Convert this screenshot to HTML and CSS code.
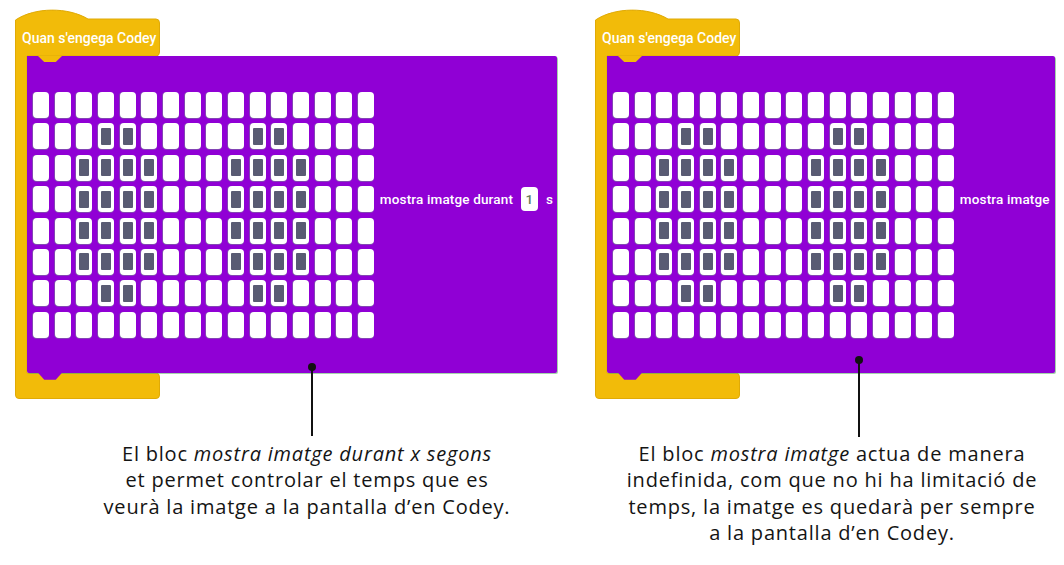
FILE: index.html
```html
<!DOCTYPE html>
<html lang="ca">
<head>
<meta charset="utf-8">
<title>Codey - mostra imatge</title>
<link rel="stylesheet" href="styles.css">
</head>
<body>
<div class="page">
  <section class="panel panel-left">
    <div class="block">
      <svg class="block-bg" viewBox="0 0 145 389" width="145" height="389" aria-hidden="true">
        <path d="M0.5,10 C20,-3 53,-3 73,9 L141,9 Q144.5,9 144.5,13 L144.5,42 Q144.5,46 141,46 L12,46 L12,363 L141,363 Q144.5,363 144.5,367 L144.5,385 Q144.5,388.5 141,388.5 L4,388.5 Q0.5,388.5 0.5,385 Z" fill="#f2bb09" stroke="#e0aa06" stroke-width="1"/>
      </svg>
      <div class="hat-label">Quan s'engega Codey</div>
      <div class="stack stack-left">
        <div class="grid">
          <i></i><i></i><i></i><i></i><i></i><i></i><i></i><i></i><i></i><i></i><i></i><i></i><i></i><i></i><i></i><i></i>
          <i></i><i></i><i></i><i class="on"></i><i class="on"></i><i></i><i></i><i></i><i></i><i></i><i class="on"></i><i class="on"></i><i></i><i></i><i></i><i></i>
          <i></i><i></i><i class="on"></i><i class="on"></i><i class="on"></i><i class="on"></i><i></i><i></i><i></i><i class="on"></i><i class="on"></i><i class="on"></i><i class="on"></i><i></i><i></i><i></i>
          <i></i><i></i><i class="on"></i><i class="on"></i><i class="on"></i><i class="on"></i><i></i><i></i><i></i><i class="on"></i><i class="on"></i><i class="on"></i><i class="on"></i><i></i><i></i><i></i>
          <i></i><i></i><i class="on"></i><i class="on"></i><i class="on"></i><i class="on"></i><i></i><i></i><i></i><i class="on"></i><i class="on"></i><i class="on"></i><i class="on"></i><i></i><i></i><i></i>
          <i></i><i></i><i class="on"></i><i class="on"></i><i class="on"></i><i class="on"></i><i></i><i></i><i></i><i class="on"></i><i class="on"></i><i class="on"></i><i class="on"></i><i></i><i></i><i></i>
          <i></i><i></i><i></i><i class="on"></i><i class="on"></i><i></i><i></i><i></i><i></i><i></i><i class="on"></i><i class="on"></i><i></i><i></i><i></i><i></i>
          <i></i><i></i><i></i><i></i><i></i><i></i><i></i><i></i><i></i><i></i><i></i><i></i><i></i><i></i><i></i><i></i>
        </div>
        <div class="label">
          <span>mostra imatge durant</span>
          <span class="input">1</span>
          <span>s</span>
        </div>
      </div>
    </div>
    <div class="pointer pointer-left"></div>
    <p class="caption caption-left">El bloc <em>mostra imatge durant x segons</em><br>et permet controlar el temps que es<br>veurà la imatge a la pantalla d’en Codey.</p>
  </section>

  <section class="panel panel-right">
    <div class="block">
      <svg class="block-bg" viewBox="0 0 145 389" width="145" height="389" aria-hidden="true">
        <path d="M0.5,10 C20,-3 53,-3 73,9 L141,9 Q144.5,9 144.5,13 L144.5,42 Q144.5,46 141,46 L12,46 L12,363 L141,363 Q144.5,363 144.5,367 L144.5,385 Q144.5,388.5 141,388.5 L4,388.5 Q0.5,388.5 0.5,385 Z" fill="#f2bb09" stroke="#e0aa06" stroke-width="1"/>
      </svg>
      <div class="hat-label">Quan s'engega Codey</div>
      <div class="stack stack-right">
        <div class="grid">
          <i></i><i></i><i></i><i></i><i></i><i></i><i></i><i></i><i></i><i></i><i></i><i></i><i></i><i></i><i></i><i></i>
          <i></i><i></i><i></i><i class="on"></i><i class="on"></i><i></i><i></i><i></i><i></i><i></i><i class="on"></i><i class="on"></i><i></i><i></i><i></i><i></i>
          <i></i><i></i><i class="on"></i><i class="on"></i><i class="on"></i><i class="on"></i><i></i><i></i><i></i><i class="on"></i><i class="on"></i><i class="on"></i><i class="on"></i><i></i><i></i><i></i>
          <i></i><i></i><i class="on"></i><i class="on"></i><i class="on"></i><i class="on"></i><i></i><i></i><i></i><i class="on"></i><i class="on"></i><i class="on"></i><i class="on"></i><i></i><i></i><i></i>
          <i></i><i></i><i class="on"></i><i class="on"></i><i class="on"></i><i class="on"></i><i></i><i></i><i></i><i class="on"></i><i class="on"></i><i class="on"></i><i class="on"></i><i></i><i></i><i></i>
          <i></i><i></i><i class="on"></i><i class="on"></i><i class="on"></i><i class="on"></i><i></i><i></i><i></i><i class="on"></i><i class="on"></i><i class="on"></i><i class="on"></i><i></i><i></i><i></i>
          <i></i><i></i><i></i><i class="on"></i><i class="on"></i><i></i><i></i><i></i><i></i><i></i><i class="on"></i><i class="on"></i><i></i><i></i><i></i><i></i>
          <i></i><i></i><i></i><i></i><i></i><i></i><i></i><i></i><i></i><i></i><i></i><i></i><i></i><i></i><i></i><i></i>
        </div>
        <div class="label">
          <span>mostra imatge</span>
        </div>
      </div>
    </div>
    <div class="pointer pointer-right"></div>
    <p class="caption caption-right">El bloc <em>mostra imatge</em> actua de manera<br>indefinida, com que no hi ha limitació de<br>temps, la imatge es quedarà per sempre<br>a la pantalla d’en Codey.</p>
  </section>
</div>
</body>
</html>
```

FILE: styles.css
```css
* { box-sizing: border-box; }

body {
  margin: 0;
  background: #ffffff;
  font-family: Roboto, "Liberation Sans", sans-serif;
}

.page {
  display: flex;
  padding: 10px 0 0 15px;
}

.panel {
  position: relative;
  display: flex;
  flex-direction: column;
  align-items: flex-start;
}

.panel-left { width: 580px; }
.panel-right { width: 469px; }

.block {
  position: relative;
  padding-bottom: 26px;
}

.block-bg {
  position: absolute;
  left: 0;
  top: 0;
  overflow: visible;
  z-index: 0;
}

.hat-label {
  position: relative;
  z-index: 1;
  height: 46px;
  padding: 20px 0 0 7px;
  font-size: 14px;
  font-weight: 500;
  line-height: 16px;
  color: #ffffff;
}

.stack {
  position: relative;
  z-index: 1;
  margin-left: 12px;
  display: flex;
  align-items: flex-start;
  padding: 36px 0 35px 6px;
  background: #9000d5;
  border-radius: 0 2px 2px 2px;
  box-shadow: 1px 1px 0 rgba(90, 175, 100, 0.55);
}

.stack-left { width: 530px; }
.stack-right { width: 448px; }

.stack::before {
  content: "";
  position: absolute;
  left: 11px;
  top: 0;
  width: 24px;
  height: 6px;
  background: #f2bb09;
  clip-path: polygon(0 0, 100% 0, 74% 100%, 26% 100%);
}

.stack::after {
  content: "";
  position: absolute;
  left: 11px;
  bottom: -7px;
  width: 24px;
  height: 7px;
  background: #9000d5;
  clip-path: polygon(0 0, 100% 0, 74% 100%, 26% 100%);
}

.grid {
  display: grid;
  grid-template-columns: repeat(16, 16px);
  grid-auto-rows: 26px;
  column-gap: 5.67px;
  row-gap: 5.4px;
}

.grid i {
  display: flex;
  align-items: center;
  justify-content: center;
  background: #ffffff;
  border-radius: 4px;
  box-shadow: -1px 0 0 rgba(110, 200, 120, 0.35), 0 1px 0 rgba(110, 200, 120, 0.35);
}

.grid i.on::after {
  content: "";
  width: 10px;
  height: 17px;
  background: #595b73;
  border-radius: 1px;
}

.label {
  display: flex;
  align-items: center;
  height: 24px;
  margin: 95px 0 0 6px;
  font-size: 13.5px;
  font-weight: 500;
  letter-spacing: 0.15px;
  color: #ffffff;
  white-space: nowrap;
}

.input {
  display: flex;
  align-items: center;
  justify-content: center;
  width: 17px;
  height: 24px;
  margin: 0 8px;
  background: #ffffff;
  border-radius: 4px;
  color: #64805e;
  font-weight: 500;
}

.pointer {
  position: absolute;
  z-index: 2;
  width: 2px;
  background: #111111;
}

.pointer::before {
  content: "";
  position: absolute;
  left: -3px;
  top: -4px;
  width: 8px;
  height: 8px;
  border-radius: 50%;
  background: #111111;
}

.pointer-left { left: 296px; top: 357px; height: 69px; }
.pointer-right { left: 263px; top: 350px; height: 77px; }

.caption {
  margin: 42px 0 0 0;
  width: 460px;
  text-align: center;
  font-family: "Open Sans", "Liberation Sans", sans-serif;
  font-size: 20px;
  line-height: 26.5px;
  letter-spacing: 0.8px;
  color: #141414;
}

.caption em { font-style: italic; }

.caption-left { margin-left: 62px; }
.caption-right { margin-left: 7px; }
```
